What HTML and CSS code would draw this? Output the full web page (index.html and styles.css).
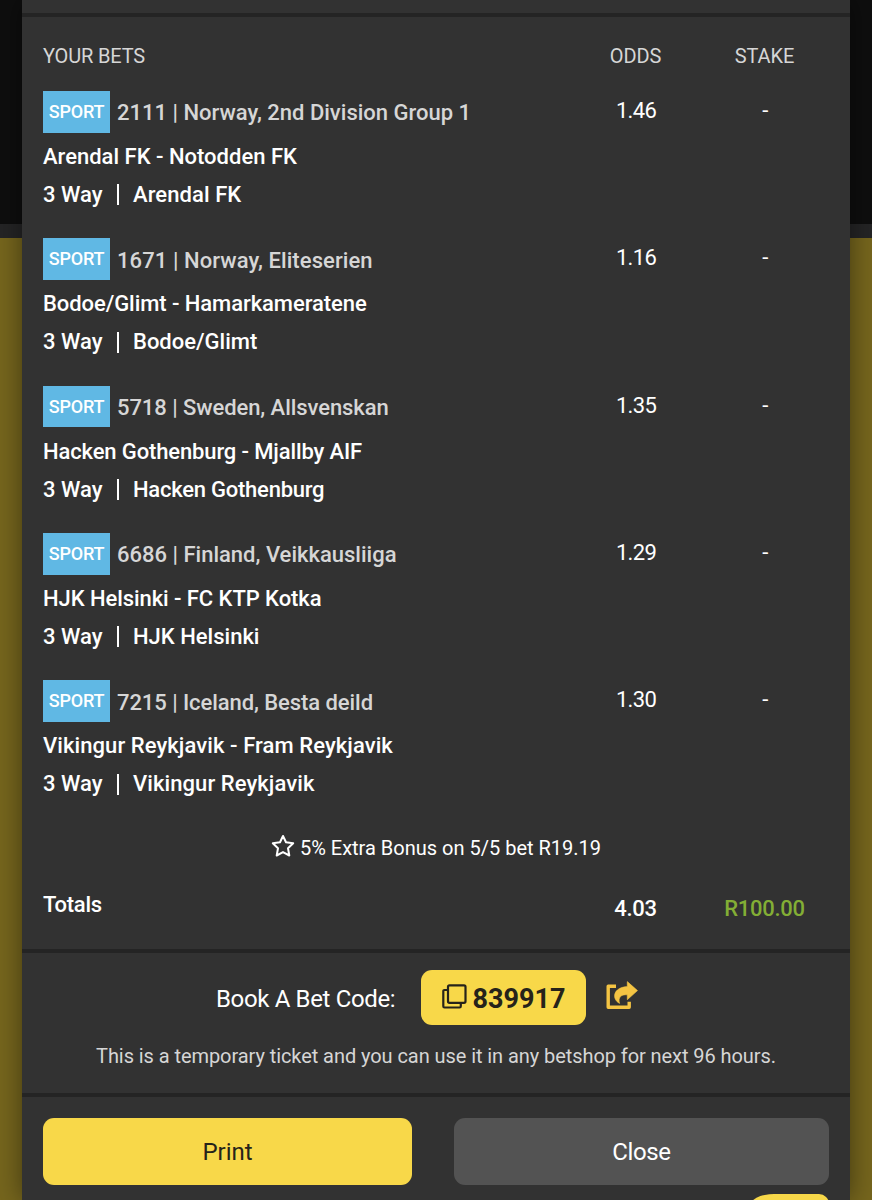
FILE: index.html
```html
<!DOCTYPE html>
<html lang="en">
<head>
    <meta charset="UTF-8">
    <title>Book a bet</title>
    <link rel="stylesheet" href="styles.css">
</head>
<body>

<div class="page">
    <div class="modal">
        <div class="modalTop"></div>

        <div class="bets">
            <div class="row head">
                <span>YOUR BETS</span>
                <span class="num">ODDS</span>
                <span class="num">STAKE</span>
            </div>

            <div class="row bet">
                <div class="info">
                    <p class="league"><span class="sport">SPORT</span><span class="name">2111 | Norway, 2nd Division Group 1</span></p>
                    <p class="match">Arendal FK - Notodden FK</p>
                    <p class="pick"><span class="way">3 Way</span><i></i><span class="loose">Arendal FK</span></p>
                </div>
                <span class="num">1.46</span>
                <span class="num">-</span>
            </div>
            <div class="row bet">
                <div class="info">
                    <p class="league"><span class="sport">SPORT</span><span class="name loose">1671 | Norway, Eliteserien</span></p>
                    <p class="match tight">Bodoe/Glimt - Hamarkameratene</p>
                    <p class="pick"><span class="way">3 Way</span><i></i><span>Bodoe/Glimt</span></p>
                </div>
                <span class="num">1.16</span>
                <span class="num">-</span>
            </div>
            <div class="row bet">
                <div class="info">
                    <p class="league"><span class="sport">SPORT</span><span class="name tight">5718 | Sweden, Allsvenskan</span></p>
                    <p class="match tighter">Hacken Gothenburg - Mjallby AIF</p>
                    <p class="pick"><span class="way">3 Way</span><i></i><span class="tightest">Hacken Gothenburg</span></p>
                </div>
                <span class="num">1.35</span>
                <span class="num">-</span>
            </div>
            <div class="row bet">
                <div class="info">
                    <p class="league"><span class="sport">SPORT</span><span class="name">6686 | Finland, Veikkausliiga</span></p>
                    <p class="match tight">HJK Helsinki - FC KTP Kotka</p>
                    <p class="pick"><span class="way">3 Way</span><i></i><span>HJK Helsinki</span></p>
                </div>
                <span class="num">1.29</span>
                <span class="num">-</span>
            </div>
            <div class="row bet">
                <div class="info">
                    <p class="league"><span class="sport">SPORT</span><span class="name tight">7215 | Iceland, Besta deild</span></p>
                    <p class="match loose">Vikingur Reykjavik - Fram Reykjavik</p>
                    <p class="pick"><span class="way">3 Way</span><i></i><span class="loose">Vikingur Reykjavik</span></p>
                </div>
                <span class="num">1.30</span>
                <span class="num">-</span>
            </div>

            <p class="bonus">
                <svg width="24" height="24" viewBox="0 0 24 24"><path d="M12 2l3 6.3 7.2 1-5.2 5 1.3 7.2-6.3-3.4-6.3 3.4 1.3-7.2-5.2-5 7.2-1z" fill="none" stroke="#fff" stroke-width="2" stroke-linejoin="round"/></svg>
                <span>5% Extra Bonus on 5/5 bet R19.19</span>
            </p>

            <div class="row totals">
                <span class="label">Totals</span>
                <span class="num">4.03</span>
                <span class="num stake">R100.00</span>
            </div>
        </div>

        <div class="booking">
            <div class="code">
                <span class="codeLabel">Book A Bet Code:</span>
                <button class="codeBtn">
                    <svg width="25" height="25" viewBox="0 0 25 25" fill="none" stroke="#26231a" stroke-width="2.2" stroke-linejoin="round"><rect x="6" y="1.3" width="17.5" height="17.5" rx="1.5"/><path d="M6 6H2.5Q1.3 6 1.3 7.2V22.3Q1.3 23.5 2.5 23.5H17.6Q18.8 23.5 18.8 22.3V18.8"/></svg>
                    <span>839917</span>
                </button>
                <svg class="share" width="32" height="29" viewBox="0 0 32 29"><path d="M10 5.2H2.2V26.2H23.2V20.8" fill="none" stroke="#f4c443" stroke-width="3.4" stroke-linejoin="round"/><path d="M21.3.6L31.5 9.6 21.3 18.7V13.8C15.2 13.2 11.8 16.4 13.6 22.4 5.6 18.4 6.6 6.4 21.3 5.6z" fill="#f4c443" stroke="#f4c443" stroke-width=".6" stroke-linejoin="round"/></svg>
            </div>
            <p class="note">This is a temporary ticket and you can use it in any betshop for next 96 hours.</p>
        </div>

        <div class="actions">
            <button class="print">Print</button>
            <button class="closeBtn">Close</button>
        </div>
    </div>
    <div class="chat"></div>
</div>

</body>
</html>
```
FILE: styles.css
```css
body,p,button{ margin: 0; padding: 0; font-family: Roboto,"Liberation Sans",sans-serif;}
button{ border: 0; font-size: 24px;}
svg{ display: block; flex: none;}

.page{
    height: 1200px;
    overflow: hidden;
    position: relative;
    background: linear-gradient(#0e0e0e 224px, #242425 224px, #242425 238px, #75651d 238px);
}
.modal{
    width: 828px;
    height: 1200px;
    margin: 0 auto;
    background: #323232;
    color: #fff;
    box-shadow: 0 0 24px rgba(0,0,0,.45);
}
.modalTop{
    height: 13px;
    border-bottom: 4px solid #242424;
}

/* bets */
.bets{
    height: 932px;
    padding: 0 21px;
    border-bottom: 4px solid #242424;
}
.row{
    display: grid;
    grid-template-columns: 1fr 129px 129px;
}
.num{
    text-align: center;
}
.head{
    height: 74px;
    line-height: 79px;
    font-size: 20px;
    letter-spacing: -.15px;
    color: #d6d6d6;
}
.bet{
    height: 147.35px;
    font-size: 22px;
}
.bet .num{
    line-height: 40px;
    padding-left: 1px;
    letter-spacing: -.7px;
}
.league{
    display: flex;
    align-items: center;
    height: 41.5px;
    color: #d6d6d6;
    font-weight: 500;
}
.sport{
    width: 67px;
    height: 41.5px;
    line-height: 42px;
    margin-right: 7px;
    background: #60b8e4;
    color: #fff;
    font-size: 18px;
    letter-spacing: -.2px;
    text-align: center;
}
.name{
    line-height: 41px;
    padding-top: 2px;
}
.match,.pick{
    font-weight: 500;
    white-space: nowrap;
}
.match{
    line-height: 38px;
    margin-top: 5.4px;
}
.pick{
    display: flex;
    align-items: center;
    line-height: 38px;
}
.way{
    width: 60px;
}
.pick i{
    width: 2px;
    height: 21px;
    margin: 0 14px;
    background: #fff;
}
.loose{ letter-spacing: .08px;}
.tight{ letter-spacing: -.07px;}
.tighter{ letter-spacing: -.13px;}
.tightest{ letter-spacing: -.24px;}

.bonus{
    display: flex;
    justify-content: center;
    align-items: center;
    gap: 5px;
    height: 40px;
    font-size: 20px;
}
.bonus svg{
    margin-top: -3px;
}
.totals{
    height: 70px;
    font-size: 22px;
    line-height: 81px;
    font-weight: 500;
    letter-spacing: -.3px;
}
.totals .label{
    line-height: 73px;
}
.totals .stake{
    color: #83ae35;
}

/* booking code */
.booking{
    height: 140px;
    border-bottom: 4px solid #242424;
}
.code{
    display: flex;
    align-items: center;
    height: 55px;
    padding: 17px 0 0 194px;
}
.codeLabel{
    width: 205px;
    padding-top: 2px;
    font-size: 24px;
    letter-spacing: -.35px;
}
.codeBtn{
    display: flex;
    align-items: center;
    justify-content: center;
    gap: 6px;
    width: 165px;
    height: 55px;
    border-radius: 11px;
    background: #f8d849;
    color: #26231a;
    font-size: 27px;
    font-weight: 700;
}
.codeBtn svg{
    margin-top: -2px;
}
.codeBtn span{
    padding-top: 2px;
}
.share{
    margin: -4px 0 0 20px;
}
.note{
    text-align: center;
    font-size: 20px;
    line-height: 62px;
    letter-spacing: -.07px;
    color: #d6d6d6;
}

/* buttons */
.actions{
    display: flex;
    justify-content: space-between;
    padding: 21px 21px 0;
}
.print,.closeBtn{
    height: 67px;
    border-radius: 11px;
}
.print{
    width: 369px;
    background: #f8d849;
    color: #26231a;
}
.closeBtn{
    width: 375px;
    background: #535353;
    color: #fff;
    letter-spacing: -.4px;
}
.chat{
    width: 79px;
    height: 50px;
    border-radius: 24px 10px 0 0 / 12px 10px 0 0;
    background: #f8d849;
    position: absolute;
    left: 750px;
    top: 1194px;
}
```
